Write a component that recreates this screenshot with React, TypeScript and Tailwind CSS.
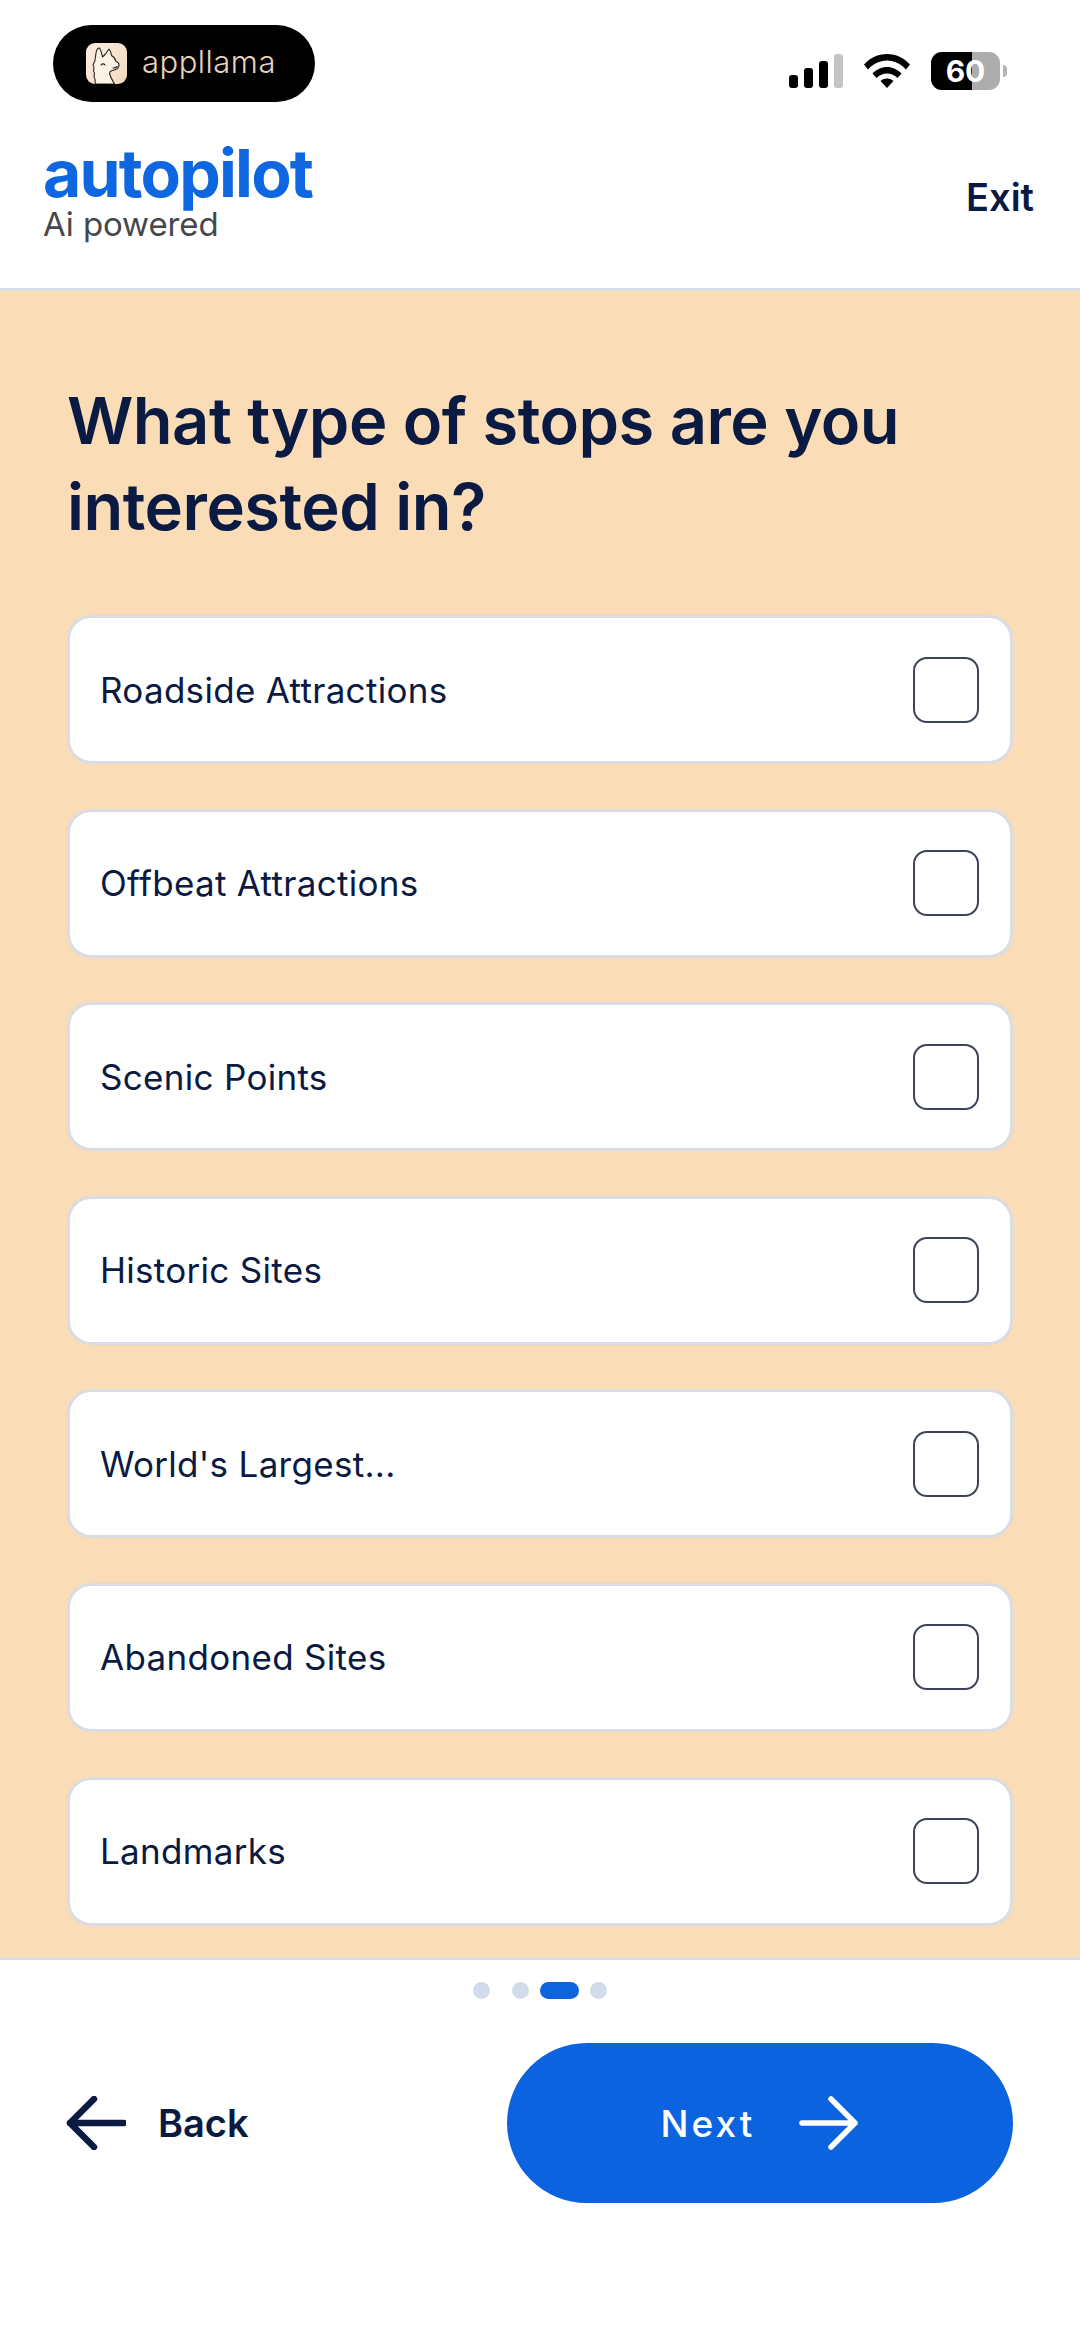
const stops = [
  "Roadside Attractions",
  "Offbeat Attractions",
  "Scenic Points",
  "Historic Sites",
  "World's Largest...",
  "Abandoned Sites",
  "Landmarks",
]

function LlamaIcon() {
  return (
    <div className="w-[41px] h-[41px] rounded-[9px] bg-gradient-to-br from-[#fbeee0] to-[#f3d9bd] overflow-hidden">
      <svg viewBox="0 0 41 41" className="w-full h-full" fill="#fdf3e7" stroke="#2a2320" strokeWidth="1.1" strokeLinecap="round" strokeLinejoin="round">
        <path d="M10 41c-2-2 0-4-1.500-6s1-4-.5-6 1-4-.5-6 1.500-3 1.500-6l1-7c.5-3 2-5 3.500-5 2 3 2.500 7 3 9l3-3 3.500-5c1.500 2 2.500 4.500 2.500 6.500 2.500 1.500 4 3.500 4.500 6 2 .5 3 2 3 3.500 0 3.500-3 5-7 5.500-1.500.5-2.500 1.500-2.500 3 1 4 3 7 5 10.500z" />
        <path d="M15 22c1-1.500 3-1.500 4 0M27 25c1.500 0 3-.5 4-1.500" fill="none" />
      </svg>
    </div>
  )
}

function StatusBar() {
  return (
    <div className="flex items-start justify-between h-[86px] pt-[25px] pl-[53px] pr-[73px]">
      <div className="w-[262px] h-[77px] rounded-full bg-black flex items-center pl-[33px] gap-[15px]">
        <LlamaIcon />
        <span className="font-['Inter',sans-serif] font-light text-[31px] leading-none text-[#e8d3bb] tracking-[0.5px] pb-[4px]">appllama</span>
      </div>
      <div className="flex items-center gap-[21px] pt-[27px]">
        <svg width="54" height="34" viewBox="0 0 54 34">
          <rect x="0" y="21" width="9" height="13" rx="3" fill="#000" />
          <rect x="15" y="14" width="9" height="20" rx="3" fill="#000" />
          <rect x="30" y="7" width="9" height="27" rx="3" fill="#000" />
          <rect x="45" y="0" width="9" height="34" rx="3" fill="#c4c4c4" />
        </svg>
        <svg width="46" height="34" viewBox="0 0 46 34" fill="#000">
          <path d="M0 10.500C6 4 14 0 23 0s17 4 23 10.500l-4 5C37 10 30.500 6.500 23 6.500S9 10 4 15.500z" />
          <path d="M8.500 19.500C12.500 15.500 17.500 13 23 13s10.500 2.500 14.500 6.500l-4 4.500C30.500 21 27 19.500 23 19.500S15.500 21 12.500 24z" />
          <path d="M16.500 27c2-1.700 4-2.500 6.500-2.500s4.500.8 6.500 2.500L23 34z" />
        </svg>
        <div className="flex items-center gap-[3px]">
          <div className="relative w-[69px] h-[38px] rounded-[11px] overflow-hidden flex bg-[#adadad]">
            <div className="w-[41px] bg-black" />
            <span className="absolute inset-0 flex items-center justify-center font-['Inter',sans-serif] font-bold text-[30px] leading-none text-white">60</span>
          </div>
          <div className="w-[4px] h-[12px] rounded-r-full bg-[#b5b5b5]" />
        </div>
      </div>
    </div>
  )
}

export default function App() {
  return (
    <div className="w-[1080px] h-[2336px] bg-white flex flex-col font-['Inter',sans-serif] text-[#0a1a42]">
      <StatusBar />

      <header className="h-[205px] shrink-0 flex items-start justify-between pl-[43px] pr-[46px] border-b-[3px] border-[#d9dce3]">
        <div className="pt-[62px]">
          <div className="font-bold text-[66px] leading-[50px] tracking-[-1.8px] text-[#0e67e0]">autopilot</div>
          <div className="mt-[9px] text-[33px] leading-[34px] tracking-[-0.1px] text-[#45474d]">Ai powered</div>
        </div>
        <button className="mt-[91px] text-[38px] leading-[40px] font-semibold">Exit</button>
      </header>

      <main className="h-[1666px] shrink-0 bg-[#fadcb6] px-[67px] pt-[87px]">
        <h1 className="text-[65px] leading-[86px] font-semibold tracking-[-0.5px] h-[172px]">
          What type of stops are you
          <br />
          interested in?
        </h1>
        <div className="mt-[65px] w-[946px] flex flex-col gap-[44.6px]">
          {stops.map((stop) => (
            <div key={stop} className="h-[149px] rounded-[24px] bg-white border-[3px] border-[#d9dce3] flex items-center justify-between pl-[30px] pr-[31px]">
              <span className="text-[35px] leading-[44px] tracking-[0.3px]">{stop}</span>
              <div className="w-[66px] h-[66px] rounded-[14px] border-2 border-[#3d4459]" />
            </div>
          ))}
        </div>
      </main>

      <footer className="flex-1 border-t-[3px] border-[#d9dce3]">
        <div className="flex items-center justify-center h-[60px] gap-[11px]">
          <div className="w-[17px] h-[17px] rounded-full bg-[#d1dbea] mr-[11px]" />
          <div className="w-[17px] h-[17px] rounded-full bg-[#d1dbea]" />
          <div className="w-[39px] h-[17px] rounded-full bg-[#0e64dc]" />
          <div className="w-[17px] h-[17px] rounded-full bg-[#d1dbea]" />
        </div>
        <div className="flex items-center justify-between pl-[66px] pr-[67px] mt-[23px]">
          <button className="flex items-center gap-[32px]">
            <svg width="60" height="54" viewBox="0 0 60 54" fill="none" stroke="currentColor" strokeWidth="6.500" strokeLinecap="round" strokeLinejoin="round">
              <path d="M58 27H4M28 3 4 27l24 24" />
            </svg>
            <span className="text-[38px] leading-none font-semibold">Back</span>
          </button>
          <button className="w-[506px] h-[160px] rounded-[80px] bg-[#0c63e0] flex items-center justify-center gap-[44px] text-white">
            <span className="text-[37px] leading-none font-medium tracking-[3px]">Next</span>
            <svg width="60" height="54" viewBox="0 0 60 54" fill="none" stroke="currentColor" strokeWidth="5.500" strokeLinecap="round" strokeLinejoin="round">
              <path d="M3 27h53M32 3l24 24-24 24" />
            </svg>
          </button>
        </div>
      </footer>
    </div>
  )
}
